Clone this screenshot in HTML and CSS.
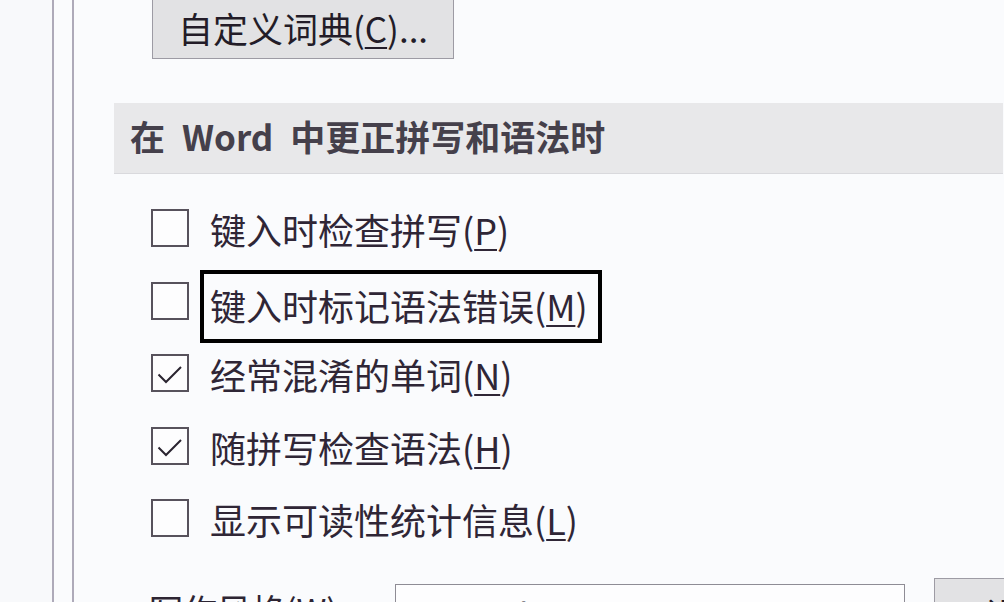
FILE: index.html
```html
<!DOCTYPE html>
<html lang="zh">
<head>
<meta charset="utf-8">
<link rel="stylesheet" href="styles.css">
</head>
<body>
<div class="window">
  <div class="nav"></div>
  <div class="gutter"></div>
  <div class="content">
    <div class="btn-row">
      <button class="btn dict">自定义词典(<u>C</u>)...</button>
    </div>
    <div class="section-head">在 Word 中更正拼写和语法时</div>
    <div class="options">
      <div class="opt">
        <span class="box"></span>
        <span class="label">键入时检查拼写(<u>P</u>)</span>
      </div>
      <div class="opt">
        <span class="box"></span>
        <span class="label hl">键入时标记语法错误(<u>M</u>)</span>
      </div>
      <div class="opt">
        <span class="box"><svg viewBox="0 0 37 37" width="37" height="37"><path d="M7.5 20.5 L15 28 L30 13" fill="none" stroke="#2a2430" stroke-width="2"/></svg></span>
        <span class="label">经常混淆的单词(<u>N</u>)</span>
      </div>
      <div class="opt">
        <span class="box"><svg viewBox="0 0 37 37" width="37" height="37"><path d="M7.5 20.5 L15 28 L30 13" fill="none" stroke="#2a2430" stroke-width="2"/></svg></span>
        <span class="label">随拼写检查语法(<u>H</u>)</span>
      </div>
      <div class="opt">
        <span class="box"></span>
        <span class="label">显示可读性统计信息(<u>L</u>)</span>
      </div>
    </div>
    <div class="style-row">
      <span class="style-label">写作风格(<u>W</u>):</span>
      <span class="select">Normal</span>
      <button class="btn settings">设置(<u>T</u>)...</button>
    </div>
  </div>
</div>
</body>
</html>
```

FILE: styles.css
```css
html, body {
  margin: 0;
  padding: 0;
  height: 602px;
  overflow: hidden;
  background: #fafbfd;
}
body {
  font-family: "Noto Sans CJK SC", "Noto Sans", sans-serif;
  color: #2d2533;
}
.window {
  display: flex;
  height: 602px;
}
.nav {
  flex: none;
  width: 52px;
  border-right: 2px solid #aeaab9;
  background: #f8f9fb;
}
.gutter {
  flex: none;
  width: 18px;
  border-right: 2px solid #aeaab9;
}
.content {
  flex: 1;
  min-width: 0;
  overflow: hidden;
  display: flex;
  flex-direction: column;
  padding-left: 40px;
  padding-right: 1px;
}
.btn-row {
  padding-left: 38px;
  height: 59px;
  flex: none;
}
.btn {
  font-family: "Noto Sans CJK SC", "Noto Sans", sans-serif;
  background: #e2e2e4;
  border: 1.5px solid #9d9ba4;
  color: #231c28;
  padding: 0;
  margin: 0;
}
.btn u, .label u, .style-label u {
  text-decoration-thickness: 2px;
  text-underline-offset: 4px;
}
.dict {
  width: 302px;
  height: 82px;
  margin-top: -23px;
  font-size: 35px;
  line-height: 1;
  padding-top: 18px;
}
.section-head {
  flex: none;
  margin-top: 44px;
  height: 70px;
  background: #e8e8ea;
  border-bottom: 1px solid #d9d9dd;
  font-weight: 700;
  font-size: 35px;
  line-height: 66px;
  padding-left: 16px;
  color: #45404b;
  word-spacing: 9px;
  white-space: nowrap;
}
.options {
  flex: none;
  margin-top: 19px;
  padding-left: 37px;
  display: flex;
  flex-direction: column;
}
.opt {
  height: 72.5px;
  display: flex;
  align-items: center;
}
.box {
  width: 34px;
  height: 34px;
  border: 2px solid #57525c;
  background: #fdfdfe;
  flex: none;
  position: relative;
  margin-right: 21px;
  margin-top: -2px;
}
.box svg {
  position: absolute;
  left: -2px;
  top: -2px;
}
.label {
  font-size: 36px;
  line-height: 44px;
  color: #2f2636;
  white-space: nowrap;
}
.hl {
  border: 4px solid #000;
  padding: 9px 10px 12px 6px;
  margin-left: -10px;
  margin-top: 9px;
}
.style-row {
  flex: none;
  margin-top: 22px;
  display: flex;
  align-items: flex-start;
  white-space: nowrap;
}
.style-label {
  font-size: 34px;
  line-height: 40px;
  margin-top: 12px;
  padding-left: 35px;
  width: 246px;
  flex: none;
}
.select {
  width: 510px;
  height: 50px;
  margin-top: 6px;
  border: 1.5px solid #8e8c95;
  background: #fdfdfe;
  font-size: 34px;
  line-height: 40px;
  padding: 10px 0 0 14px;
  box-sizing: border-box;
  flex: none;
}
.settings {
  margin-left: 29px;
  width: 120px;
  height: 60px;
  font-size: 34px;
  text-align: left;
  padding-left: 50px;
  padding-top: 10px;
  flex: none;
}
```
